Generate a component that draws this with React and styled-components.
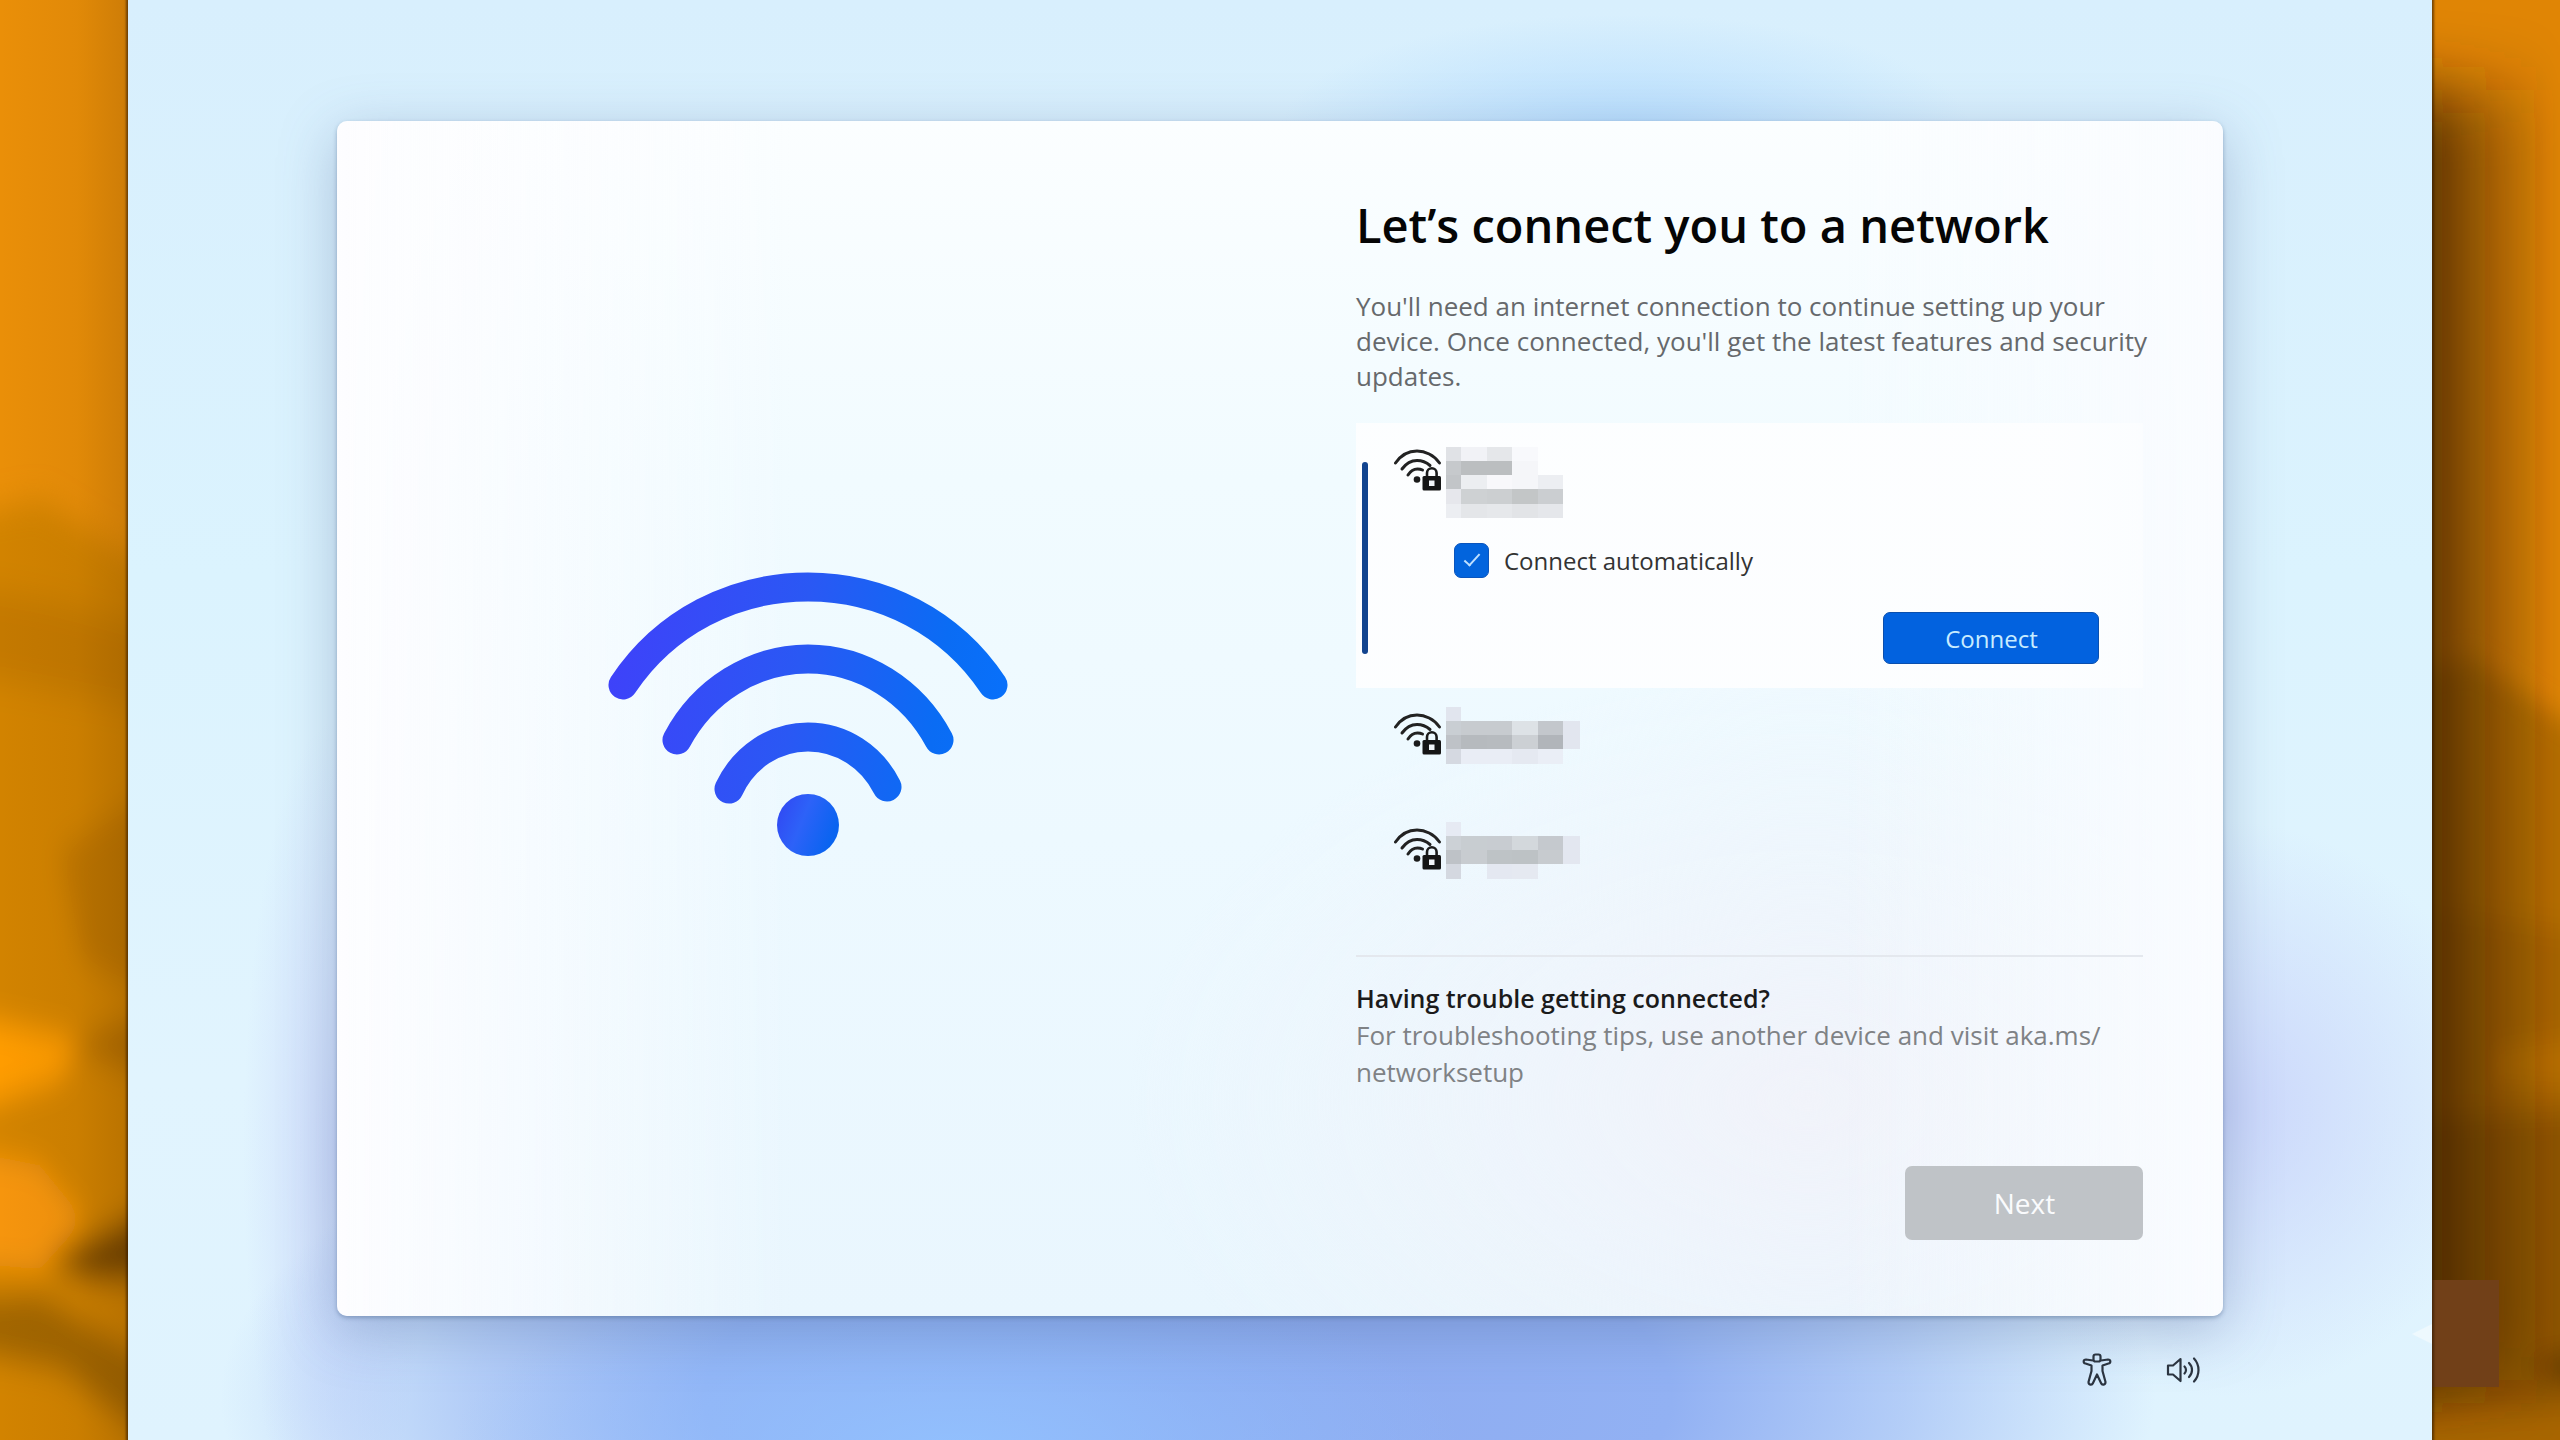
import React from "react";
import styled, { createGlobalStyle } from "styled-components";

const Global = createGlobalStyle`
  *, *::before, *::after { box-sizing: border-box; }
  body { margin: 0; font-family: "Open Sans", "Noto Sans", sans-serif; color: #111; }
  h1, h2, p, ul { margin: 0; padding: 0; }
`;

const Desktop = styled.div`
  display: grid;
  grid-template-columns: 5fr 90fr 5fr;
  min-height: 100vh;
  background: #e08a06;
`;

const Side = styled.aside`
  position: relative;
  overflow: hidden;
`;

const Wallpaper = styled.svg`
  position: absolute;
  inset: 0;
  width: 100%;
  height: 100%;
`;

const Sticker = styled.div`
  position: absolute;
  left: 0;
  bottom: 53px;
  width: 67px;
  height: 107px;
  background: #714018;
`;

const Screen = styled.main`
  position: relative;
  z-index: 1;
  display: flex;
  flex-direction: column;
  align-items: center;
  padding-top: 121px;
  box-shadow: 0 0 2px 2px rgba(50, 25, 0, 0.6);
  background:
    radial-gradient(ellipse 22% 14% at 36% 101%, rgba(146, 194, 255, 0.9) 0%, rgba(146, 190, 252, 0) 100%),
    radial-gradient(ellipse 42% 26% at 46% 97%, #8caaf0 0%, #92b1f3 50%, rgba(150, 180, 243, 0.6) 74%, rgba(170, 200, 248, 0) 100%),
    radial-gradient(ellipse 15% 8% at 65% 9%, rgba(180, 220, 254, 0.9) 0%, rgba(190, 225, 252, 0) 100%),
    radial-gradient(ellipse 12% 20% at 91% 77%, rgba(196, 206, 250, 0.8) 0%, rgba(205, 216, 250, 0) 100%),
    radial-gradient(ellipse 4% 30% at 9% 80%, rgba(196, 208, 250, 0.7) 0%, rgba(205, 216, 250, 0) 100%),
    linear-gradient(180deg, #d8effd 0%, #dbf3fe 40%, #e1f4fe 75%, #dff3fe 100%);
`;

const Pointer = styled.div`
  position: absolute;
  right: 0;
  bottom: 96px;
  border: 10px solid transparent;
  border-left: 0;
  border-right: 20px solid #eef9fe;
`;

const Card = styled.section`
  display: grid;
  grid-template-columns: 1fr 1fr;
  width: 81.9%;
  min-height: 83vh;
  border-radius: 10px;
  background:
    linear-gradient(90deg, #fdfdff 0%, rgba(253, 253, 255, 0) 24%, rgba(250, 252, 255, 0) 80%, #fafcff 100%),
    radial-gradient(ellipse 36% 36% at 78% 82%, #f1f3fa 0%, rgba(241, 243, 251, 0) 100%),
    linear-gradient(180deg, #fbfeff 0%, #f1fbff 30%, #edf9ff 60%, #e9f6fe 100%);
  box-shadow: 0 2px 4px rgba(60, 90, 130, 0.4), 0 14px 56px rgba(80, 105, 155, 0.36);
`;

const Illustration = styled.div`
  display: flex;
  align-items: center;
  justify-content: center;
  padding-bottom: 8px;
`;

const Panel = styled.div`
  display: flex;
  flex-direction: column;
  padding: 72px 70px 76px 76px;
`;

const Title = styled.h1`
  font-size: 47px;
  line-height: 64px;
  font-weight: 600;
  color: #050505;
  white-space: nowrap;
`;

const Body = styled.p`
  font-size: 26px;
  line-height: ${(p) => p.$leading}px;
  color: ${(p) => p.$color};
`;

const Intro = styled.div`
  padding-top: 32px;
`;

const Networks = styled.ul`
  list-style: none;
  margin: 29px 10px 0 0;
  display: flex;
  flex-direction: column;
`;

const Network = styled.li`
  display: flex;
  align-items: flex-start;
  height: 115px;
  padding: 19px 0 0 38px;
`;

const Selected = styled.li`
  display: flex;
  height: 265px;
  background: linear-gradient(90deg, rgba(253, 254, 255, 0.95) 88%, rgba(253, 254, 255, 0.6) 100%);
`;

const Accent = styled.span`
  flex: none;
  width: 6px;
  margin: 39px 26px 34px 6px;
  border-radius: 3px;
  background: #12448f;
`;

const SelectedBody = styled.div`
  flex: 1;
  display: flex;
  flex-direction: column;
  padding: 24px 44px 24px 0;
`;

const NetworkHead = styled.div`
  display: flex;
  align-items: flex-start;
  gap: 4px;
  height: 96px;
  & > svg:first-child {
    margin-top: ${(p) => (p.$tall ? 2 : 6)}px;
  }
`;

const AutoLabel = styled.label`
  display: flex;
  align-items: center;
  gap: 15px;
  margin-left: 60px;
  font-size: 24px;
  line-height: 35px;
  color: #333;
`;

const Check = styled.input`
  appearance: none;
  flex: none;
  display: grid;
  place-items: center;
  width: 35px;
  height: 35px;
  margin: 0;
  border: 1px solid #0a55bd;
  border-radius: 7px;
  background: #0264dd;
  &:checked::after {
    content: "";
    width: 8px;
    height: 16px;
    margin-bottom: 5px;
    border: solid #bfe0ff;
    border-width: 0 2px 2px 0;
    transform: rotate(42deg);
  }
`;

const Button = styled.button`
  align-self: flex-end;
  margin-top: auto;
  margin-right: ${(p) => (p.$primary ? 0 : 10)}px;
  border: ${(p) => (p.$primary ? "1px solid #0a4fae" : "0")};
  border-radius: 7px;
  width: ${(p) => (p.$primary ? 216 : 238)}px;
  height: ${(p) => (p.$primary ? 52 : 74)}px;
  font-family: inherit;
  font-size: ${(p) => (p.$primary ? 24 : 28)}px;
  color: ${(p) => (p.$primary ? "#c8ecff" : "#fafbfd")};
  background: ${(p) => (p.$primary ? "#0262df" : "#bfc3c7")};
`;

const Trouble = styled.section`
  margin: 37px 10px 0 0;
  padding-top: 22px;
  border-top: 2px solid #e4e8ee;
`;

const TroubleTitle = styled.h2`
  font-size: 25px;
  line-height: 38px;
  font-weight: 600;
  color: #1b1b1b;
`;

const Tray = styled.footer`
  display: flex;
  justify-content: flex-end;
  gap: 46px;
  width: 81.9%;
  padding: 34px 20px 0 0;
`;

const IconButton = styled.button`
  display: flex;
  align-items: center;
  justify-content: center;
  width: 40px;
  height: 40px;
  padding: 0;
  border: 0;
  background: none;
`;

function BigWifi() {
  return (
    <svg width="404" height="290" viewBox="0 0 404 290" aria-hidden="true">
      <defs>
        <linearGradient id="arc" gradientUnits="userSpaceOnUse" x1="0" y1="0" x2="404" y2="60">
          <stop offset="0" stopColor="#4040fa" />
          <stop offset="0.5" stopColor="#2a58f4" />
          <stop offset="0.85" stopColor="#0a6cf4" />
          <stop offset="1" stopColor="#0870fa" />
        </linearGradient>
        <linearGradient id="dot" x1="0" y1="0" x2="1" y2="0.4">
          <stop offset="0" stopColor="#3244f2" />
          <stop offset="0.5" stopColor="#2d62f8" />
          <stop offset="1" stopColor="#0a64f0" />
        </linearGradient>
      </defs>
      <g fill="none" stroke="url(#arc)" strokeWidth="29" strokeLinecap="round">
        <path d="M17 115C59 52 128 17 202 17s143 35 185 98" />
        <path d="M71 170C97 121 147 89 202 89s105 32 131 81" />
        <path d="M123 219C138 187 168 167 202 167s64 20 79 50" />
      </g>
      <circle cx="202" cy="255" r="31" fill="url(#dot)" />
    </svg>
  );
}

function LockedWifi() {
  return (
    <svg width="48" height="42" viewBox="0 0 48 42" aria-label="Secured network" role="img">
      <g fill="none" stroke="#222" strokeWidth="3" strokeLinecap="round">
        <path d="M1.500 14C7 6 15 2 23 2s17 4 22.500 12" />
        <path d="M8 20C12 14.500 17 11.500 23 11.500c5 0 9 1.500 13 5" />
        <path d="M14 26c2.500-4 5.500-6 9.500-6 2 0 3.500.300 5 1" />
      </g>
      <circle cx="23" cy="30.500" r="3.300" fill="#1b1b1b" />
      <path d="M33 28v-4a4.800 4.800 0 0 1 9.600 0v4" fill="none" stroke="#1b1b1b" strokeWidth="2.600" />
      <rect x="28.500" y="27" width="18.500" height="14.500" rx="1.500" fill="#151515" />
      <rect x="35" y="31.500" width="5.500" height="5.500" fill="#f1f4f8" />
    </svg>
  );
}

const COLS = [0, 15, 41, 66, 92, 117, 134];
const ROWS = [0, 14, 28, 42, 57, 71];

function Mosaic({ cells }) {
  return (
    <svg width="134" height="71" viewBox="0 0 134 71" aria-label="Hidden network name" role="img">
      {cells.flatMap((row, y) =>
        row.map((shade, x) =>
          shade ? (
            <rect
              key={`${x}-${y}`}
              x={COLS[x]}
              y={ROWS[y]}
              width={COLS[x + 1] - COLS[x]}
              height={ROWS[y + 1] - ROWS[y]}
              fill={shade}
              shapeRendering="crispEdges"
            />
          ) : null
        )
      )}
    </svg>
  );
}

const FIRST = [
  ["#e0e2e6", "#f1f2f6", "#e5e7ea", "#f8f9fc", null, null],
  ["#c6c9cc", "#bbbec0", "#bbbec0", "#f5f6f9", null, null],
  ["#c2c5c8", "#eceef1", "#f8f8fb", "#f5f6f9", "#eceef2", null],
  ["#e6e7ec", "#ced1d3", "#cccfd1", "#c3c6c7", "#cbced1", null],
  ["#eceef2", "#e4e6e9", "#e6e8eb", "#e2e4e7", "#e5e7eb", null],
];
const SECOND = [
  ["#e1e5ee", null, null, null, null, null],
  ["#c9ced3", "#c7cbcf", "#c7cbcf", "#dde2e6", "#c3c7cc", "#e2e6ef"],
  ["#bec2c7", "#b6babe", "#b7bbbf", "#ccd0d4", "#b1b5ba", "#e2e6ef"],
  ["#d5d9e1", "#e9edf5", "#e9edf5", "#e5e9f1", "#eaeef6", null],
];
const THIRD = [
  ["#e6eaf3", null, null, null, null, null],
  ["#ccd1d6", "#c8cdd1", "#c8ccd1", "#d3d8dc", "#c5c9ce", "#e3e7f0"],
  ["#bec2c7", "#c8ccd0", "#bec3c6", "#bdc2c5", "#c7cbcf", "#e3e7f0"],
  ["#d4d8e0", null, "#e4e8f1", "#e5e9f1", null, null],
];

function LeftWallpaper() {
  return (
    <Wallpaper viewBox="0 0 128 1440" preserveAspectRatio="none" aria-hidden="true">
      <defs>
        <linearGradient id="lshade" x1="0" x2="1">
          <stop offset="0" stopColor="#5a3200" stopOpacity="0" />
          <stop offset="0.6" stopColor="#5a3200" stopOpacity="0.06" />
          <stop offset="1" stopColor="#5a3200" stopOpacity="0.2" />
        </linearGradient>
        <filter id="lblur" filterUnits="userSpaceOnUse" x="-80" y="0" width="300" height="1600">
          <feGaussianBlur stdDeviation="11 16" />
        </filter>
      </defs>
      <rect width="128" height="1440" fill="#ea8f08" />
      <g filter="url(#lblur)">
        <path d="M-60 520L40 500 200 600V1560H-60Z" fill="#d28306" />
        <path d="M-60 580L50 600 200 640V720L-60 670Z" fill="#c47904" />
        <path d="M60 850L200 760V1020L80 960Z" fill="#bd7404" />
        <path d="M-60 1010L80 1040 60 1080 -60 1120Z" fill="#ff9c06" />
        <path d="M-60 1145L40 1165 85 1220 40 1270 -60 1260Z" fill="#f69507" />
        <path d="M70 1045L200 990V1100Z" fill="#b06c04" />
        <path d="M50 1262L200 1180V1285L90 1280Z" fill="#704303" />
        <path d="M-60 1300L40 1295 200 1390V1480L60 1370 -60 1345Z" fill="#a06505" />
      </g>
      <rect width="128" height="1440" fill="url(#lshade)" />
    </Wallpaper>
  );
}

function RightWallpaper() {
  return (
    <Wallpaper viewBox="0 0 128 1440" preserveAspectRatio="none" aria-hidden="true">
      <defs>
        <linearGradient id="rshade" gradientUnits="userSpaceOnUse" x1="0" x2="128" y1="0" y2="0">
          <stop offset="0" stopColor="#3c2000" stopOpacity="0.74" />
          <stop offset="0.4" stopColor="#3c2000" stopOpacity="0.42" />
          <stop offset="1" stopColor="#3c2000" stopOpacity="0" />
        </linearGradient>
        <filter id="rblur" filterUnits="userSpaceOnUse" x="-80" y="0" width="300" height="1600">
          <feGaussianBlur stdDeviation="8 14" />
        </filter>
        <filter id="rsoft" filterUnits="userSpaceOnUse" x="-100" y="-100" width="340" height="1700">
          <feGaussianBlur stdDeviation="10 34" />
        </filter>
      </defs>
      <rect width="128" height="1440" fill="#e08505" />
      <g filter="url(#rblur)">
        <path d="M-60 680L40 660 200 765V1560H-60Z" fill="#b66e04" />
        <path d="M-60 900L200 940V1560H-60Z" fill="#a86504" />
        <path d="M-60 1120L200 1110V1560H-60Z" fill="#8e5503" />
        <path d="M60 1050L200 1030V1090L60 1080Z" fill="#b87004" />
        <path d="M90 1365L200 1350V1390Z" fill="#3c2402" />
        <path d="M-60 1415L200 1405V1560H-60Z" fill="#a86504" />
      </g>
      <rect x="-80" y="90" width="300" height="1290" fill="url(#rshade)" filter="url(#rsoft)" />
    </Wallpaper>
  );
}

export default function App() {
  return (
    <>
      <Global />
      <Desktop>
        <Side>
          <LeftWallpaper />
        </Side>
        <Screen>
          <Card>
            <Illustration>
              <BigWifi />
            </Illustration>
            <Panel>
              <Title>Let’s connect you to a network</Title>
              <Intro>
                <Body $leading={35} $color="#66696c">
                  You'll need an internet connection to continue setting up your device. Once connected, you'll get the
                  latest features and security updates.
                </Body>
              </Intro>
              <Networks>
                <Selected>
                  <Accent />
                  <SelectedBody>
                    <NetworkHead $tall>
                      <LockedWifi />
                      <Mosaic cells={FIRST} />
                    </NetworkHead>
                    <AutoLabel>
                      <Check type="checkbox" defaultChecked />
                      Connect automatically
                    </AutoLabel>
                    <Button $primary type="button">
                      Connect
                    </Button>
                  </SelectedBody>
                </Selected>
                <Network>
                  <NetworkHead>
                    <LockedWifi />
                    <Mosaic cells={SECOND} />
                  </NetworkHead>
                </Network>
                <Network>
                  <NetworkHead>
                    <LockedWifi />
                    <Mosaic cells={THIRD} />
                  </NetworkHead>
                </Network>
              </Networks>
              <Trouble>
                <TroubleTitle>Having trouble getting connected?</TroubleTitle>
                <Body $leading={37} $color="#7f8285">
                  For troubleshooting tips, use another device and visit aka.ms/
                  <wbr />
                  networksetup
                </Body>
              </Trouble>
              <Button type="button" disabled>
                Next
              </Button>
            </Panel>
          </Card>
          <Tray>
            <IconButton type="button" aria-label="Accessibility">
              <svg width="30" height="34" viewBox="0 0 30 34" fill="none" stroke="#2b3440" strokeWidth="2.200" strokeLinejoin="round">
                <rect x="11.500" y="1.500" width="7" height="7" rx="2" />
                <path d="M11 7.500L4 6.500C1 6.500 1 10 3.500 10.500L9.500 12.500V18L6.500 29c0 3 3.500 3.500 4.500 1L15 21.500 19 30c1 2.500 4.500 2 4.500-1L20.500 18V12.500L26.500 10.500C29 10 29 6.500 26 6.500L19 7.500" />
              </svg>
            </IconButton>
            <IconButton type="button" aria-label="Volume">
              <svg width="34" height="30" viewBox="0 0 34 30" fill="none" stroke="#2b3440" strokeWidth="2.200" strokeLinecap="round" strokeLinejoin="round">
                <path d="M2 10.500V19.500H7L14.500 26V4L7 10.500Z" />
                <path d="M18.500 11.500c2 2 2 5 0 7M23 8c4 4 4 10 0 14M28 3.500c6 6.500 6 16.500 0 23" />
              </svg>
            </IconButton>
          </Tray>
          <Pointer />
        </Screen>
        <Side>
          <RightWallpaper />
          <Sticker />
        </Side>
      </Desktop>
    </>
  );
}
